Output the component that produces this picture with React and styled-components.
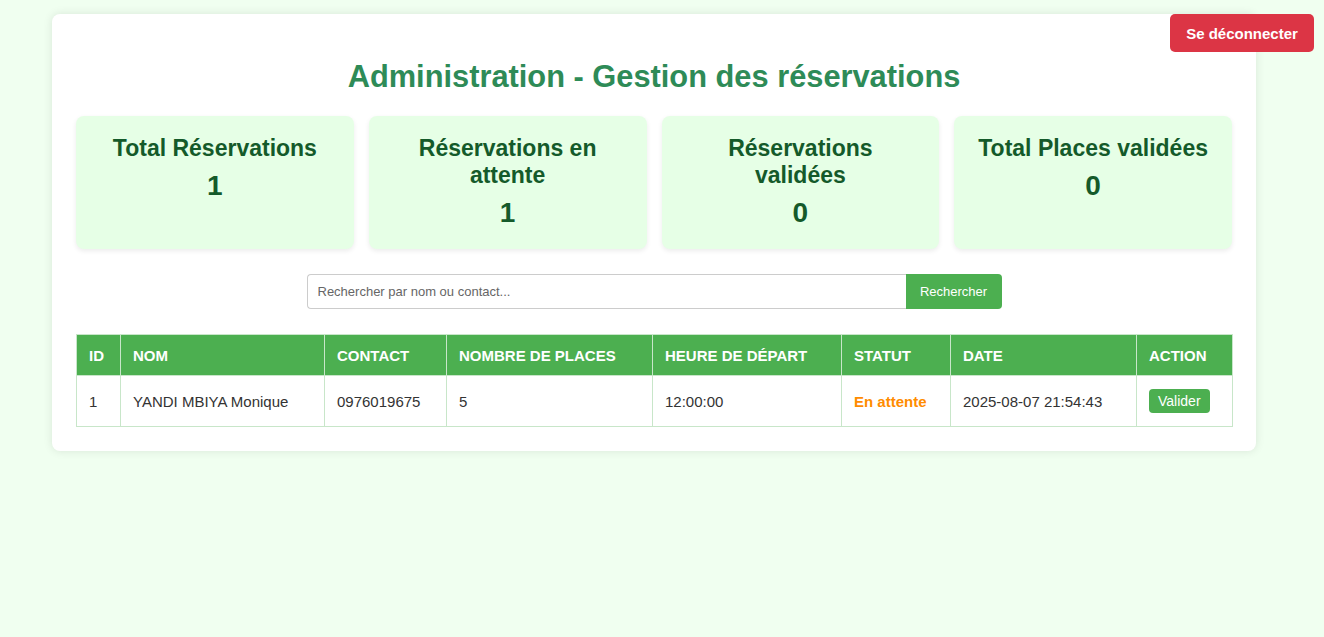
import React from "react";
import styled, { createGlobalStyle } from "styled-components";

const GlobalStyle = createGlobalStyle`
  html, body {
    margin: 0;
    padding: 0;
    background-color: #f0fff0;
    font-family: "Liberation Sans", Arial, sans-serif;
    font-size: 15px;
    color: #333;
  }
`;

const Page = styled.div`
  position: relative;
  min-height: 637px;
  padding: 14px 0 0 52px;
  box-sizing: border-box;
`;

const LogoutButton = styled.button`
  position: absolute;
  top: 14px;
  right: 10px;
  width: 144px;
  height: 38px;
  border: none;
  border-radius: 5px;
  background-color: #dc3545;
  color: #fff;
  font-family: inherit;
  font-size: 15px;
  font-weight: bold;
  cursor: pointer;
`;

const Container = styled.div`
  width: 1204px;
  box-sizing: border-box;
  padding: 24px;
  background-color: #fff;
  border-radius: 8px;
  box-shadow: 0 0 10px rgba(0, 0, 0, 0.1);
`;

const Title = styled.h1`
  margin: 21px 0;
  text-align: center;
  font-size: 30.8px;
  line-height: 36px;
  color: #2e8b57;
`;

const Stats = styled.div`
  display: grid;
  grid-template-columns: repeat(4, 1fr);
  gap: 15px;
`;

const StatCard = styled.div`
  min-height: 133px;
  box-sizing: border-box;
  padding: 19px 22px 20px;
  background-color: #e6ffe6;
  border-radius: 8px;
  box-shadow: 0 2px 5px rgba(0, 0, 0, 0.08);
  text-align: center;
  color: #145a2a;
`;

const StatLabel = styled.h3`
  margin: 0 0 8px;
  font-size: 23px;
  line-height: 27px;
`;

const StatValue = styled.p`
  margin: 0;
  font-size: 28px;
  line-height: 32px;
  font-weight: bold;
`;

const SearchForm = styled.form`
  display: flex;
  justify-content: center;
  margin: 25px 0;
`;

const SearchInput = styled.input`
  width: 599px;
  height: 35px;
  box-sizing: border-box;
  padding: 0 10px;
  border: 1px solid #ccc;
  border-right: none;
  border-radius: 4px 0 0 4px;
  font-family: inherit;
  font-size: 13px;
  color: #333;

  &::placeholder {
    color: #666;
  }
`;

const SearchButton = styled.button`
  width: 96px;
  height: 35px;
  border: none;
  border-radius: 0 4px 4px 0;
  background-color: #4caf50;
  color: #fff;
  font-family: inherit;
  font-size: 13px;
  cursor: pointer;
`;

const Table = styled.table`
  width: 100%;
  border-collapse: collapse;
  table-layout: fixed;
  font-size: 15px;
`;

const Th = styled.th`
  width: ${(p) => p.$w}px;
  height: 41px;
  box-sizing: border-box;
  padding: 0 12px;
  border: 1px solid #c8e6c9;
  background-color: #4caf50;
  color: #fff;
  font-weight: bold;
  text-align: left;
  text-transform: uppercase;
`;

const Td = styled.td`
  height: 50px;
  padding: 0 12px;
  border: 1px solid #c8e6c9;
  color: ${(p) => (p.$status ? "#ff8c00" : "#333")};
  font-weight: ${(p) => (p.$status ? "bold" : "normal")};
`;

const ValidateButton = styled.button`
  height: 24px;
  padding: 0 9px;
  border: none;
  border-radius: 4px;
  background-color: #4caf50;
  color: #fff;
  font-family: inherit;
  font-size: 14px;
  cursor: pointer;
`;

const stats = [
  { label: "Total Réservations", value: 1 },
  { label: "Réservations en attente", value: 1 },
  { label: "Réservations validées", value: 0 },
  { label: "Total Places validées", value: 0 },
];

const columns = [
  { label: "ID", w: 44 },
  { label: "Nom", w: 204 },
  { label: "Contact", w: 122 },
  { label: "Nombre de places", w: 206 },
  { label: "Heure de départ", w: 189 },
  { label: "Statut", w: 109 },
  { label: "Date", w: 186 },
  { label: "Action", w: 96 },
];

const reservations = [
  {
    id: 1,
    nom: "YANDI MBIYA Monique",
    contact: "0976019675",
    places: 5,
    heure: "12:00:00",
    statut: "En attente",
    date: "2025-08-07 21:54:43",
  },
];

const App = () => {
  return (
    <>
      <GlobalStyle />
      <Page>
        <LogoutButton>Se déconnecter</LogoutButton>
        <Container>
          <Title>Administration - Gestion des réservations</Title>
          <Stats>
            {stats.map((s) => (
              <StatCard key={s.label}>
                <StatLabel>{s.label}</StatLabel>
                <StatValue>{s.value}</StatValue>
              </StatCard>
            ))}
          </Stats>
          <SearchForm onSubmit={(e) => e.preventDefault()}>
            <SearchInput placeholder="Rechercher par nom ou contact..." />
            <SearchButton type="submit">Rechercher</SearchButton>
          </SearchForm>
          <Table>
            <thead>
              <tr>
                {columns.map((c) => (
                  <Th key={c.label} $w={c.w}>
                    {c.label}
                  </Th>
                ))}
              </tr>
            </thead>
            <tbody>
              {reservations.map((r) => (
                <tr key={r.id}>
                  <Td>{r.id}</Td>
                  <Td>{r.nom}</Td>
                  <Td>{r.contact}</Td>
                  <Td>{r.places}</Td>
                  <Td>{r.heure}</Td>
                  <Td $status>{r.statut}</Td>
                  <Td>{r.date}</Td>
                  <Td>
                    <ValidateButton>Valider</ValidateButton>
                  </Td>
                </tr>
              ))}
            </tbody>
          </Table>
        </Container>
      </Page>
    </>
  );
};

export default App;
